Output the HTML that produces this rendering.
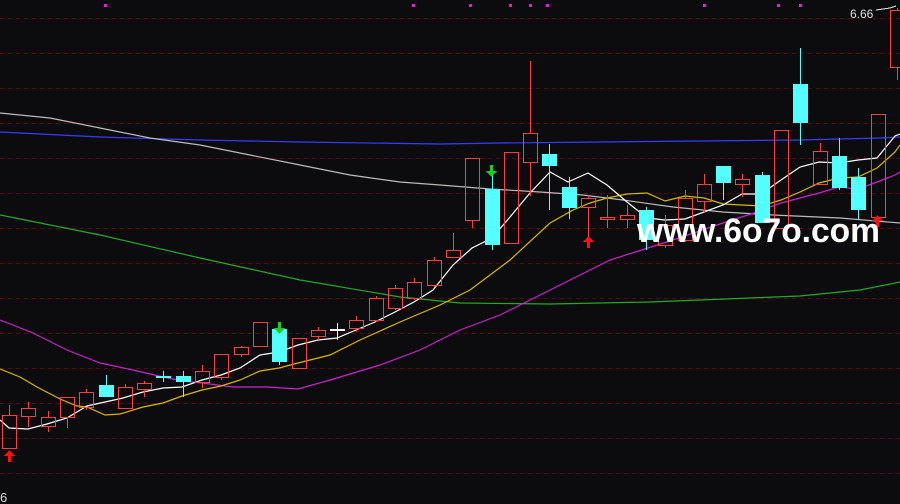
<!DOCTYPE html>
<html><head><meta charset="utf-8"><style>
html,body{margin:0;padding:0;background:#0c0c0f;width:900px;height:504px;overflow:hidden}
svg{display:block}
text{font-family:"Liberation Sans",sans-serif}
</style></head><body>
<svg id="s" width="900" height="504" xmlns="http://www.w3.org/2000/svg" shape-rendering="crispEdges">
<rect width="900" height="504" fill="#0c0c0f"/>
<g id="grid" stroke="#5a0a0a" stroke-dasharray="4,4"></g>
<g id="ma" fill="none" shape-rendering="auto"></g>
<g id="c"></g>
<text x="850" y="18" fill="#dddddd" font-size="12">6.66</text>
<text x="0" y="502" fill="#dddddd" font-size="13">6</text>
<text x="637" y="242" fill="#ffffff" font-size="34" font-weight="bold" textLength="243" lengthAdjust="spacingAndGlyphs">www.6o7o.com</text>
</svg>
<script>
var NS="http://www.w3.org/2000/svg";
function el(p,t,a){var e=document.createElementNS(NS,t);for(var k in a)e.setAttribute(k,a[k]);p.appendChild(e);return e;}
var g=document.getElementById('grid');
for(var y=18;y<=480;y+=35)el(g,'line',{x1:0,x2:900,y1:y+.5,y2:y+.5});
var ma=document.getElementById('ma');
function pl(c,pts){el(ma,'polyline',{stroke:c,'stroke-width':1.2,points:pts.map(function(p){return p.join(',')}).join(' ')});}
pl('#3a3aff',[[0,132],[100,137],[200,140],[300,142],[440,144],[500,143],[600,142],[700,141],[800,140],[880,138],[900,137]]);
pl('#bbbbbb',[[0,113],[50,118],[100,128],[150,138],[200,145],[250,155],[300,165],[350,175],[400,182],[440,185],[490,189],[540,192],[583,195],[623,200],[673,207],[723,212],[773,215],[840,218],[900,223]]);
pl('#22aa22',[[0,215],[100,235],[200,258],[300,280],[400,297],[460,303],[550,304],[650,302],[750,298],[800,296],[860,290],[900,282]]);
pl('#cc22cc',[[0,320],[33,333],[67,350],[100,363],[133,370],[163,377],[182,381],[202,383],[233,387],[267,387],[298,389],[330,380],[380,365],[420,350],[460,330],[500,315],[520,305],[560,285],[610,260],[673,240],[723,223],[757,212],[781,203],[819,193],[839,187],[858,189],[877,182],[895,175],[900,172]]);
pl('#d8b800',[[0,369],[20,377],[37,387],[60,399],[77,406],[87,407],[105,415],[120,414],[143,407],[163,403],[182,396],[202,390],[221,386],[240,380],[260,371],[279,368],[298,363],[330,355],[360,340],[400,322],[440,305],[470,290],[490,275],[510,260],[550,223],[573,210],[590,203],[607,198],[627,194],[647,193],[665,201],[685,196],[704,198],[723,204],[742,205],[761,206],[781,200],[800,192],[819,183],[839,178],[858,177],[877,168],[895,152],[900,145]]);
pl('#ffffff',[[0,420],[9,428],[28,429],[47,424],[67,418],[87,406],[105,402],[123,398],[143,392],[163,388],[182,387],[202,380],[221,375],[240,368],[260,355],[279,352],[298,345],[318,340],[337,338],[356,330],[375,322],[395,312],[414,302],[433,290],[453,265],[472,248],[492,238],[510,217],[530,193],[550,172],[568,182],[588,173],[607,185],[627,202],[647,218],[665,220],[685,219],[704,212],[723,205],[742,194],[761,194],[781,180],[800,167],[819,162],[839,163],[858,160],[877,158],[895,136],[900,134]]);
// [bodyTop, bodyBot, wickTop, wickBot, type r/c/w]
var C=[[415,448,405,448,'r'],[408,416,402,427,'r'],[417,426,411,432,'r'],[397,417,397,428,'r'],[392,407,389,410,'r'],[385,397,375,397,'c'],[387,408,384,408,'r'],[383,389,381,397,'r'],[376,378,371,382,'c'],[376,382,371,397,'c'],[371,382,365,388,'r'],[354,377,354,380,'r'],[347,354,346,357,'r'],[322,346,322,346,'r'],[329,362,322,365,'c'],[338,368,338,368,'r'],
[330,336,327,340,'r'],[329,331,323,340,'w'],[320,328,316,332,'r'],[298,320,296,322,'r'],[288,308,285,310,'r'],[282,298,278,300,'r'],[260,285,257,287,'r'],[250,257,233,257,'r'],[158,220,158,228,'r'],[189,245,165,250,'c'],[152,243,152,243,'r'],[133,162,61,196,'r'],[154,166,144,210,'c'],[187,208,177,219,'c'],[198,207,195,237,'r'],[217,219,195,228,'r'],[215,219,205,228,'r'],[210,240,207,250,'c'],[225,245,215,248,'r'],[198,240,190,242,'r'],[184,201,174,212,'r'],[166,183,166,200,'c'],[179,184,174,197,'r'],[175,223,172,223,'c'],[130,228,130,228,'r'],[84,123,48,145,'c'],[151,184,143,184,'r'],[156,188,138,190,'c'],[177,210,168,219,'c'],[114,217,114,217,'r'],[10,67,8,80,'r']];
var cg=document.getElementById('c');
C.forEach(function(d,i){
 var x=Math.round(9+19.3*i);var col=d[4]=='r'?'#ff4040':d[4]=='c'?'#54ffff':'#ffffff';
 el(cg,'line',{x1:x+.5,x2:x+.5,y1:d[2],y2:d[0],stroke:col});
 el(cg,'line',{x1:x+.5,x2:x+.5,y1:d[1],y2:d[3],stroke:col});
 if(d[4]=='r')el(cg,'rect',{x:x-6.5,y:d[0]+.5,width:14,height:Math.max(d[1]-d[0],1),fill:'none',stroke:col,'stroke-width':1.3});
 else el(cg,'rect',{x:x-7,y:d[0],width:15,height:Math.max(d[1]-d[0],1),fill:col});
});
function up(x,y,c){el(cg,'polygon',{points:(x-5)+','+(y+6)+' '+(x+.5)+','+y+' '+(x+6)+','+(y+6),fill:c});el(cg,'rect',{x:x-1,y:y+5,width:3,height:7,fill:c});}
function dn(x,y,c){el(cg,'rect',{x:x-1,y:y,width:3,height:7,fill:c});el(cg,'polygon',{points:(x-5)+','+(y+6)+' '+(x+.5)+','+(y+12)+' '+(x+6)+','+(y+6),fill:c});}
up(9,450,'#ff1010');up(588,236,'#ff1010');up(877,215,'#ff1010');
dn(279,322,'#20cc20');dn(491,165,'#20cc20');
[105,413,470,510,530,547,704,778,800].forEach(function(x){el(cg,'rect',{x:x-1,y:4,width:3,height:3,fill:'#dd22dd'});});
el(cg,'polyline',{points:'876,10 890,8 896,6',stroke:'#ddd',fill:'none'});
</script>
</body></html>
